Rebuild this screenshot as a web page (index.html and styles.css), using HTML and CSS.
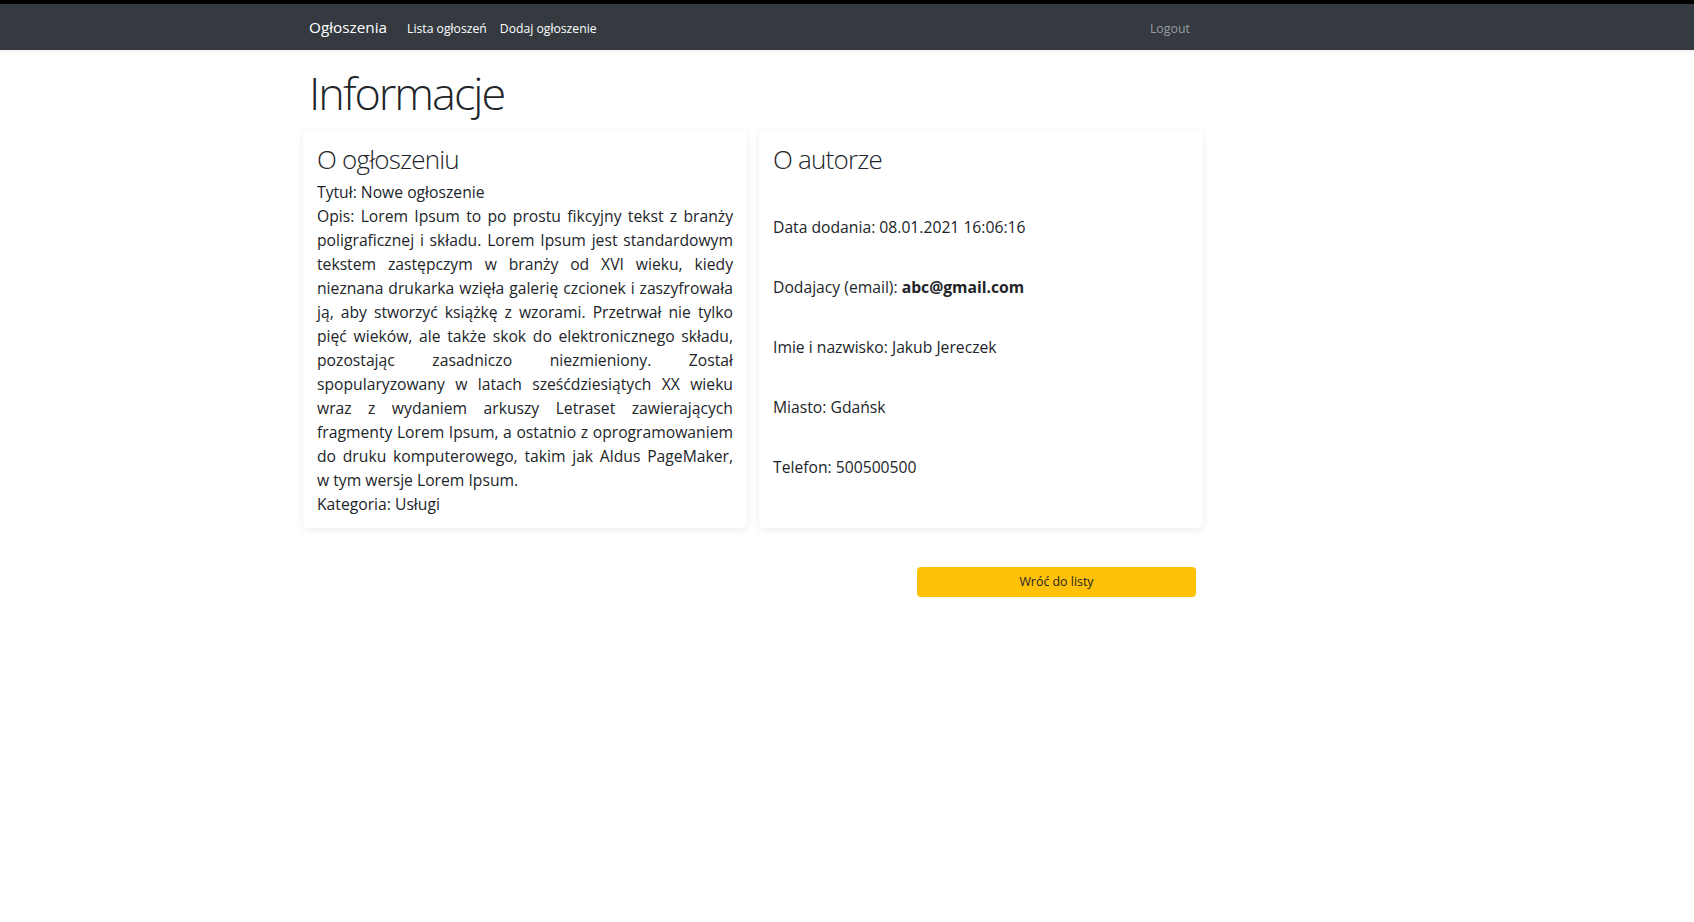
FILE: index.html
```html
<!DOCTYPE html>
<html lang="pl">
<head>
<meta charset="utf-8">
<title>Informacje</title>
<link rel="stylesheet" href="styles.css">
</head>
<body>
<header class="topbar">
  <nav class="nav-inner">
    <a class="brand" href="#">Ogłoszenia</a>
    <a class="nav-link first" href="#">Lista ogłoszeń</a>
    <a class="nav-link" href="#">Dodaj ogłoszenie</a>
    <a class="nav-link logout" href="#">Logout</a>
  </nav>
</header>
<main class="page">
  <h1 class="title">Informacje</h1>
  <div class="cards">
    <section class="card">
      <h2 class="card-title">O ogłoszeniu</h2>
      <div class="line">Tytuł: Nowe ogłoszenie</div>
      <div class="desc">
        <span class="ln">Opis: Lorem Ipsum to po prostu fikcyjny tekst z branży</span>
        <span class="ln">poligraficznej i składu. Lorem Ipsum jest standardowym</span>
        <span class="ln">tekstem zastępczym w branży od XVI wieku, kiedy</span>
        <span class="ln">nieznana drukarka wzięła galerię czcionek i zaszyfrowała</span>
        <span class="ln">ją, aby stworzyć książkę z wzorami. Przetrwał nie tylko</span>
        <span class="ln">pięć wieków, ale także skok do elektronicznego składu,</span>
        <span class="ln">pozostając zasadniczo niezmieniony. Został</span>
        <span class="ln">spopularyzowany w latach sześćdziesiątych XX wieku</span>
        <span class="ln">wraz z wydaniem arkuszy Letraset zawierających</span>
        <span class="ln">fragmenty Lorem Ipsum, a ostatnio z oprogramowaniem</span>
        <span class="ln">do druku komputerowego, takim jak Aldus PageMaker,</span>
        <span class="ln last">w tym wersje Lorem Ipsum.</span>
      </div>
      <div class="line">Kategoria: Usługi</div>
    </section>
    <section class="card">
      <h2 class="card-title">O autorze</h2>
      <div class="author">
        <div class="line">Data dodania: 08.01.2021 16:06:16</div>
        <div class="line">Dodajacy (email): <strong class="email">abc@gmail.com</strong></div>
        <div class="line">Imie i nazwisko: Jakub Jereczek</div>
        <div class="line">Miasto: Gdańsk</div>
        <div class="line">Telefon: 500500500</div>
      </div>
    </section>
  </div>
  <div class="actions">
    <button class="btn-back" type="button">Wróć do listy</button>
  </div>
</main>
</body>
</html>
```
FILE: styles.css
```css
html, body {
  margin: 0;
  padding: 0;
  background: #fff;
}
body {
  font-family: "Open Sans", "Noto Sans", sans-serif;
  font-size: 15.7px;
  line-height: 24px;
  color: #212529;
}
.topbar {
  background: #343a40;
  border-top: 4px solid #000;
  height: 46px;
  box-shadow: 0 1px 3px rgba(0, 0, 0, 0.08);
}
.nav-inner {
  box-sizing: border-box;
  width: 900px;
  height: 46px;
  margin-left: 303px;
  padding: 11.5px 13px 0 6px;
  display: flex;
  align-items: baseline;
}
.brand {
  color: #fff;
  text-decoration: none;
  font-size: 15.3px;
  line-height: 23px;
}
.nav-link {
  color: #fff;
  text-decoration: none;
  font-size: 12.2px;
  line-height: 18px;
  margin-left: 13px;
}
.nav-link.first {
  margin-left: 20px;
}
.nav-link.logout {
  margin-left: auto;
  color: #9a9da0;
  font-size: 12.4px;
}
.page {
  width: 900px;
  margin-left: 303px;
}
.title {
  font-size: 45px;
  font-weight: 300;
  letter-spacing: -2px;
  line-height: 54px;
  margin: 15.5px 0 10.5px;
  padding-left: 6px;
}
.cards {
  display: flex;
  gap: 12px;
}
.card {
  box-sizing: border-box;
  width: 444px;
  padding: 14px 14px 12px;
  background: #fff;
  border-radius: 5px;
  box-shadow: 0 2px 7px rgba(0, 0, 0, 0.08);
}
.card-title {
  font-size: 26px;
  font-weight: 300;
  letter-spacing: -0.8px;
  line-height: 31.2px;
  margin: 0 0 4.5px;
}
.desc .ln {
  display: block;
  text-align: justify;
  text-align-last: justify;
}
.desc .ln.last {
  text-align-last: left;
}
.author {
  display: flex;
  flex-direction: column;
  gap: 36px;
  padding-top: 35px;
}
.email {
  font-weight: 700;
}
.actions {
  display: flex;
  justify-content: flex-end;
  margin-top: 39px;
}
.btn-back {
  width: 279px;
  height: 30px;
  margin-right: 7px;
  border: none;
  border-radius: 4px;
  background: #ffc107;
  color: #212529;
  font-family: "Open Sans", "Noto Sans", sans-serif;
  font-size: 12.4px;
  cursor: pointer;
}
```
